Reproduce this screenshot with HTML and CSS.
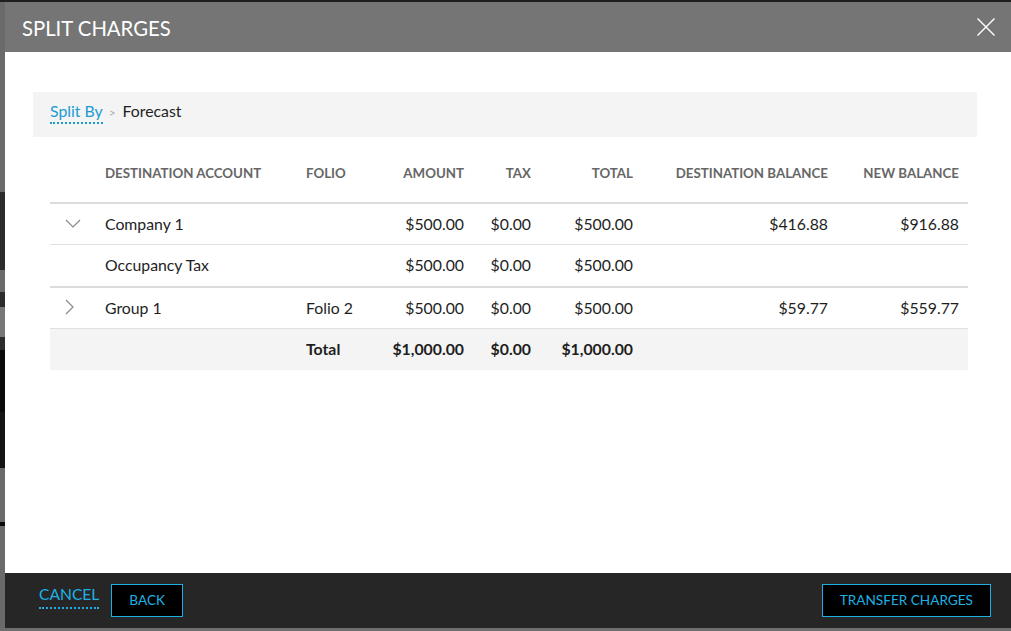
FILE: index.html
```html
<!DOCTYPE html>
<html>
<head>
<meta charset="utf-8">
<link rel="stylesheet" href="styles.css">
</head>
<body>
<div class="screen">
  <div class="backdrop-strip"></div>
  <div class="modal">
    <header class="modal-header">
      <h1 class="modal-title">SPLIT CHARGES</h1>
      <button class="close-btn" aria-label="Close">
        <svg width="18" height="18" viewBox="0 0 18 18"><path d="M0.5 0.5L17.5 17.5M17.5 0.5L0.5 17.5" stroke="#fff" stroke-width="1.4" fill="none"/></svg>
      </button>
    </header>
    <main class="modal-body">
      <nav class="breadcrumb">
        <a class="crumb-link">Split By</a>
        <span class="crumb-sep">&gt;</span>
        <span class="crumb-current">Forecast</span>
      </nav>
      <div class="table-wrap">
        <table class="charges">
          <colgroup>
            <col class="c-toggle"><col class="c-account"><col class="c-folio"><col class="c-amount"><col class="c-tax"><col class="c-total"><col class="c-dest"><col class="c-new">
          </colgroup>
          <thead>
            <tr>
              <th></th>
              <th class="left">DESTINATION ACCOUNT</th>
              <th class="left">FOLIO</th>
              <th>AMOUNT</th>
              <th>TAX</th>
              <th>TOTAL</th>
              <th>DESTINATION BALANCE</th>
              <th>NEW BALANCE</th>
            </tr>
          </thead>
          <tbody>
            <tr class="row parent">
              <td class="toggle"><svg width="16" height="9" viewBox="0 0 16 9"><path d="M1 1L8 8L15 1" stroke="#8a8a8a" stroke-width="1.2" fill="none"/></svg></td>
              <td class="left">Company 1</td>
              <td class="left"></td>
              <td>$500.00</td>
              <td>$0.00</td>
              <td>$500.00</td>
              <td>$416.88</td>
              <td>$916.88</td>
            </tr>
            <tr class="row child group-end">
              <td></td>
              <td class="left">Occupancy Tax</td>
              <td class="left"></td>
              <td>$500.00</td>
              <td>$0.00</td>
              <td>$500.00</td>
              <td></td>
              <td></td>
            </tr>
            <tr class="row parent">
              <td class="toggle"><svg width="9" height="16" viewBox="0 0 9 16"><path d="M1 1L8 8L1 15" stroke="#8a8a8a" stroke-width="1.2" fill="none"/></svg></td>
              <td class="left">Group 1</td>
              <td class="left">Folio 2</td>
              <td>$500.00</td>
              <td>$0.00</td>
              <td>$500.00</td>
              <td>$59.77</td>
              <td>$559.77</td>
            </tr>
            <tr class="row total">
              <td></td>
              <td></td>
              <td class="left">Total</td>
              <td>$1,000.00</td>
              <td>$0.00</td>
              <td>$1,000.00</td>
              <td></td>
              <td></td>
            </tr>
          </tbody>
        </table>
      </div>
    </main>
    <footer class="modal-footer">
      <div class="footer-left">
        <a class="cancel-link">CANCEL</a>
        <button class="btn">BACK</button>
      </div>
      <button class="btn">TRANSFER CHARGES</button>
    </footer>
  </div>
</div>
</body>
</html>
```

FILE: styles.css
```css
html, body {
  margin: 0;
  padding: 0;
}
body {
  width: 1011px;
  height: 631px;
  overflow: hidden;
  background: linear-gradient(to bottom, #1f1f1f 0, #1f1f1f 2px, #6e6e6e 2px, #6e6e6e 100%);
  font-family: Lato, "Open Sans", "Liberation Sans", sans-serif;
}
.screen {
  display: flex;
  padding-top: 2px;
  height: 626px;
}
.backdrop-strip {
  width: 5px;
  flex: none;
  background: linear-gradient(to bottom,
    #6a6a6a 0, #6a6a6a 190px,
    #2c2c2c 190px, #2c2c2c 268px,
    #6a6a6a 268px, #6a6a6a 290px,
    #2c2c2c 290px, #2c2c2c 305px,
    #777 305px, #777 335px,
    #2c2c2c 335px, #2c2c2c 348px,
    #0a0a0a 348px, #0a0a0a 410px,
    #141414 410px, #141414 466px,
    #6a6a6a 466px, #6a6a6a 520px,
    #0a0a0a 520px, #0a0a0a 524px,
    #6a6a6a 524px, #6a6a6a 100%);
}
.modal {
  width: 1006px;
  height: 626px;
  display: flex;
  flex-direction: column;
  background: #fff;
}
.modal-header {
  height: 50px;
  flex: none;
  background: #757575;
  display: flex;
  align-items: center;
  justify-content: space-between;
  padding: 0 16px 0 17px;
}
.modal-title {
  margin: 0;
  font-size: 20.3px;
  font-weight: 400;
  color: #fff;
  padding-top: 1px;
}
.close-btn {
  background: none;
  border: 0;
  padding: 0;
  width: 18px;
  height: 18px;
  display: block;
}
.close-btn svg { display: block; }
.modal-body {
  flex: 1;
  padding: 40px 34px 0 28px;
}
.breadcrumb {
  height: 45px;
  box-sizing: border-box;
  background: #f4f4f4;
  display: flex;
  align-items: baseline;
  padding: 9px 0 0 17px;
  font-size: 15.8px;
  line-height: 20px;
}
.crumb-link {
  color: #1a9bd0;
  border-bottom: 2px dotted #1a9bd0;
  padding-bottom: 1px;
}
.crumb-sep {
  color: #b0b0b0;
  font-size: 12px;
  margin: 0 7px 0 6px;
}
.crumb-current {
  color: #1e1e1e;
}
.table-wrap {
  padding: 6px 9px 0 17px;
}
.charges {
  width: 918px;
  table-layout: fixed;
  border-collapse: collapse;
  font-size: 15.8px;
  color: #1e1e1e;
}
.c-toggle { width: 46px; }
.c-account { width: 201px; }
.c-folio { width: 83px; }
.c-amount { width: 93px; }
.c-tax { width: 67px; }
.c-total { width: 102px; }
.c-dest { width: 195px; }
.c-new { width: 131px; }
.charges th {
  height: 59px;
  padding: 0 9px;
  font-size: 13.3px;
  font-weight: 700;
  color: #666;
  text-align: right;
  border-bottom: 2px solid #dcdcdc;
  white-space: nowrap;
}
.charges td {
  padding: 0 9px 2px;
  text-align: right;
  white-space: nowrap;
  height: 38px;
}
.charges .left { text-align: left; }
.row.parent td { border-bottom: 1px solid #e0e0e0; }
.row.group-end td { height: 39px; border-bottom: 2px solid #dcdcdc; }
.row.total td {
  background: #f4f4f4;
  font-weight: 700;
  height: 39px;
}
.charges td.toggle {
  text-align: left;
  padding-left: 15px;
}
.toggle svg { display: block; }
.modal-footer {
  height: 55px;
  flex: none;
  background: #262626;
  display: flex;
  align-items: center;
  justify-content: space-between;
  padding: 0 20px 0 34px;
}
.footer-left {
  display: flex;
  align-items: center;
}
.cancel-link {
  color: #1fb0e3;
  font-size: 15.6px;
  border-bottom: 2px dotted #1fb0e3;
  line-height: 16px;
  padding-bottom: 5px;
  margin-right: 12px;
  margin-top: -6px;
}
.btn {
  background: #000;
  border: 1px solid #1fb0e3;
  color: #1fb0e3;
  font-family: Lato, "Open Sans", "Liberation Sans", sans-serif;
  font-size: 13.6px;
  height: 33px;
  padding: 0 17px;
  margin-top: -1px;
}
```
